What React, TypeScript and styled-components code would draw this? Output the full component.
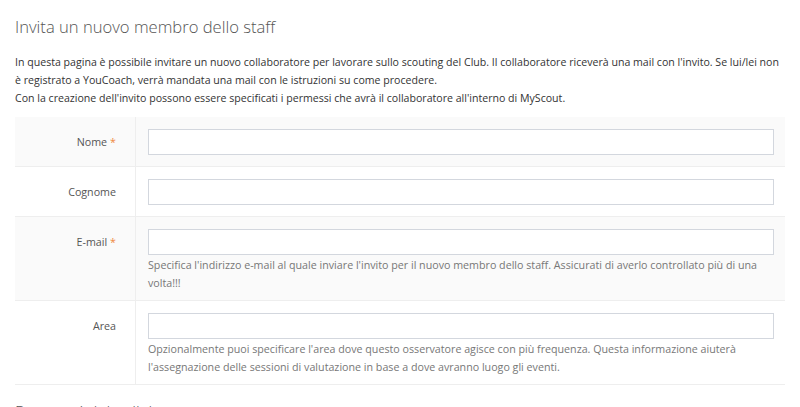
import React from 'react';
import styled, { createGlobalStyle } from 'styled-components';

const GlobalStyle = createGlobalStyle`
  body {
    margin: 0;
    background: #fff;
    font-family: 'Open Sans', 'Liberation Sans', sans-serif;
    color: #333;
  }
`;

const Page = styled.div`
  padding: 14px 15px 0 15px;
`;

const Title = styled.h1`
  margin: 0 0 13px 0;
  font-size: 16.6px;
  font-weight: 300;
  line-height: 26px;
  color: #555;
`;

const Intro = styled.p`
  margin: 0 0 10px 0;
  font-size: 10.6px;
  line-height: 18px;
  color: #333;
`;

const Form = styled.div`
  border-bottom: 1px solid #eee;
  margin-bottom: 14px;
`;

const Row = styled.div<{ $shaded?: boolean }>`
  display: grid;
  grid-template-columns: 121px 1fr;
  background: ${(p) => (p.$shaded ? '#fafafa' : '#fff')};
  & + & {
    border-top: 1px solid #eee;
  }
`;

const Label = styled.div`
  border-right: 1px solid #eee;
  padding: 12px 19px 0 0;
  text-align: right;
  font-size: 10.7px;
  line-height: 26px;
  color: #555;
`;

const Required = styled.span`
  color: #f0883e;
  margin-left: 3px;
`;

const Field = styled.div`
  padding: 12px 11px 11px 12px;
`;

const Input = styled.input`
  display: block;
  box-sizing: border-box;
  width: 100%;
  height: 26px;
  border: 1px solid #d3d7de;
  background: #fff;
  font-family: inherit;
  font-size: 10.7px;
  padding: 0 8px;
  outline: none;
`;

const Help = styled.div`
  margin: 1px 0 -3px 0;
  font-size: 10.7px;
  line-height: 18px;
  color: #777;
`;

const Subtitle = styled.h2`
  margin: 0;
  font-size: 16.6px;
  font-weight: 300;
  line-height: 26px;
  color: #555;
`;

type FieldDef = {
  label: string;
  required?: boolean;
  help?: string;
};

const fields: FieldDef[] = [
  { label: 'Nome', required: true },
  { label: 'Cognome' },
  {
    label: 'E-mail',
    required: true,
    help: "Specifica l'indirizzo e-mail al quale inviare l'invito per il nuovo membro dello staff. Assicurati di averlo controllato più di una volta!!!",
  },
  {
    label: 'Area',
    help: "Opzionalmente puoi specificare l'area dove questo osservatore agisce con più frequenza. Questa informazione aiuterà l'assegnazione delle sessioni di valutazione in base a dove avranno luogo gli eventi.",
  },
];

export default function App() {
  return (
    <>
      <GlobalStyle />
      <Page>
        <Title>Invita un nuovo membro dello staff</Title>
        <Intro>
          In questa pagina è possibile invitare un nuovo collaboratore per lavorare sullo scouting del Club. Il
          collaboratore riceverà una mail con l'invito. Se lui/lei non è registrato a YouCoach, verrà mandata una mail
          con le istruzioni su come procedere.
          <br />
          Con la creazione dell'invito possono essere specificati i permessi che avrà il collaboratore all'interno di
          MyScout.
        </Intro>
        <Form>
          {fields.map((f, i) => (
            <Row key={f.label} $shaded={i % 2 === 0}>
              <Label>
                {f.label}
                {f.required && <Required>*</Required>}
              </Label>
              <Field>
                <Input type="text" />
                {f.help && <Help>{f.help}</Help>}
              </Field>
            </Row>
          ))}
        </Form>
        <Subtitle>Permessi del collaboratore</Subtitle>
      </Page>
    </>
  );
}
